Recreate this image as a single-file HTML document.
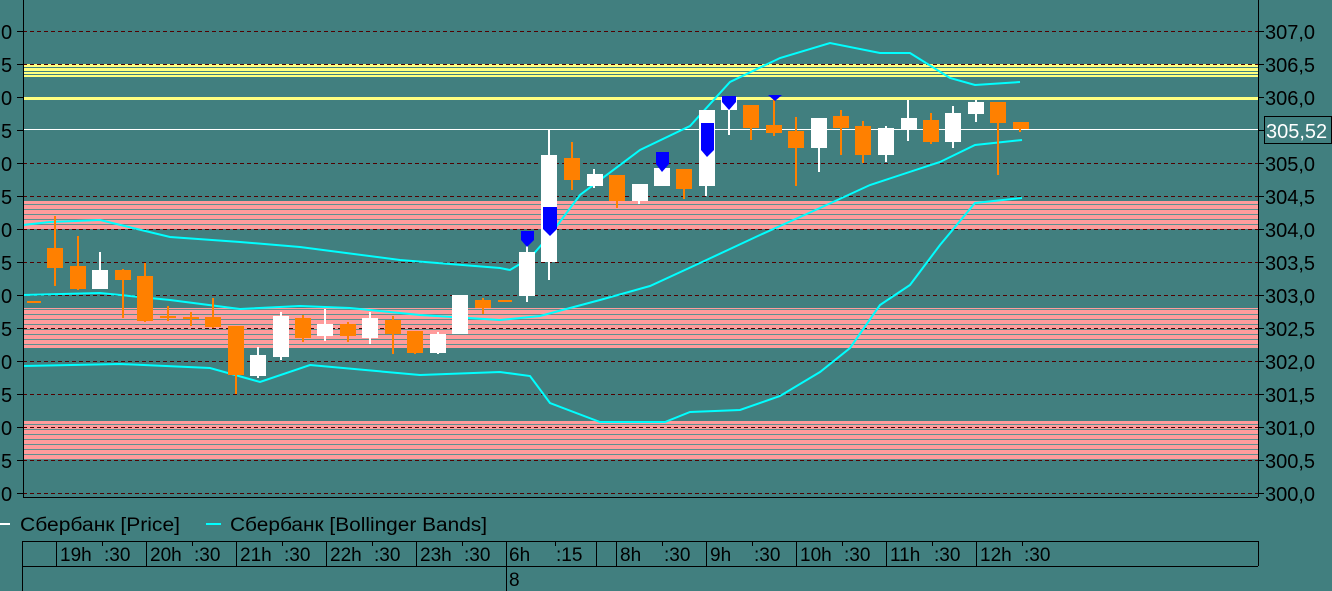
<!DOCTYPE html>
<html><head><meta charset="utf-8"><style>
html,body{margin:0;padding:0;background:#417f7f;width:1332px;height:591px;overflow:hidden;font-family:"Liberation Sans",sans-serif}
svg{position:absolute;left:0;top:0}
text{font-family:"Liberation Sans",sans-serif;font-size:20px;fill:#000}
.t{font-size:19px}
</style></head><body>
<svg width="1332" height="591" viewBox="0 0 1332 591">
<defs>
<pattern id="pk" width="10" height="5" patternUnits="userSpaceOnUse"><rect width="10" height="5" fill="#ff9c9c"/><rect y="4" width="10" height="1" fill="#5c9090"/></pattern>
</defs>
<rect width="1332" height="591" fill="#417f7f"/>
<rect x="23" y="201" width="1235" height="28" fill="url(#pk)"/>
<rect x="23" y="308" width="1235" height="40" fill="url(#pk)"/>
<rect x="23" y="421" width="1235" height="39" fill="url(#pk)"/>
<g fill="#ffff80">
<rect x="23" y="64" width="1235" height="3"/><rect x="23" y="68" width="1235" height="3"/><rect x="23" y="72" width="1235" height="2"/><rect x="23" y="75" width="1235" height="2"/>
<rect x="23" y="97" width="1235" height="3"/>
</g>
<g stroke="#500000" stroke-width="1" stroke-dasharray="4,3">
<line x1="23" x2="1258" y1="31.5" y2="31.5"/><line x1="23" x2="1258" y1="64.5" y2="64.5"/>
<line x1="23" x2="1258" y1="163.5" y2="163.5"/><line x1="23" x2="1258" y1="196.5" y2="196.5"/>
<line x1="23" x2="1258" y1="229.5" y2="229.5"/><line x1="23" x2="1258" y1="262.5" y2="262.5"/>
<line x1="23" x2="1258" y1="295.5" y2="295.5"/><line x1="23" x2="1258" y1="328.5" y2="328.5"/>
<line x1="23" x2="1258" y1="361.5" y2="361.5"/><line x1="23" x2="1258" y1="394.5" y2="394.5"/>
<line x1="23" x2="1258" y1="427.5" y2="427.5"/><line x1="23" x2="1258" y1="460.5" y2="460.5"/>
<line x1="23" x2="1258" y1="493.5" y2="493.5"/>
</g>
<line x1="23" x2="1258" y1="129.5" y2="129.5" stroke="#fff"/>
<g fill="none" stroke="#00ffff" stroke-width="2">
<polyline points="23,225 50,222 100,220 170,237 240,242 300,247 400,260 500,268 510,270 530,258 550,235 580,195 640,150 690,126 730,82 780,58 830,43 880,53 910,53 950,78 975,85 1020,82"/>
<polyline points="23,295 100,293 170,300 240,309 300,306 350,308 420,315 500,320 540,316 600,300 650,286 700,263 760,235 820,208 870,185 940,162 975,145 1022,140"/>
<polyline points="23,366 120,364 210,368 260,382 310,365 420,375 500,372 530,376 550,403 600,422 665,422 690,412 740,410 780,396 820,372 850,348 880,305 910,285 940,245 975,203 1022,198"/>
</g>
<g fill="#ff8000">
<rect x="54" y="216" width="2" height="70"/><rect x="47" y="248" width="16" height="20"/>
<rect x="77" y="236" width="2" height="54"/><rect x="70" y="266" width="16" height="23"/>
<rect x="122" y="269" width="2" height="49"/><rect x="115" y="270" width="16" height="10"/>
<rect x="144" y="263" width="2" height="59"/><rect x="137" y="276" width="16" height="45"/>
<rect x="167" y="306" width="2" height="15"/><rect x="160" y="316" width="16" height="2"/>
<rect x="190" y="312" width="2" height="14"/><rect x="183" y="317" width="16" height="2"/>
<rect x="27" y="301" width="14" height="2"/>
<rect x="212" y="298" width="2" height="30"/><rect x="205" y="317" width="16" height="10"/>
<rect x="235" y="326" width="2" height="68"/><rect x="228" y="326" width="16" height="49"/>
<rect x="302" y="315" width="2" height="27"/><rect x="295" y="318" width="16" height="20"/>
<rect x="347" y="322" width="2" height="20"/><rect x="340" y="324" width="16" height="12"/>
<rect x="392" y="316" width="2" height="38"/><rect x="385" y="320" width="16" height="14"/>
<rect x="414" y="331" width="2" height="23"/><rect x="407" y="331" width="16" height="22"/>
<rect x="482" y="298" width="2" height="16"/><rect x="475" y="300" width="16" height="8"/>
<rect x="498" y="300" width="14" height="2"/>
<rect x="571" y="142" width="2" height="48"/><rect x="564" y="158" width="16" height="22"/>
<rect x="616" y="175" width="2" height="33"/><rect x="609" y="175" width="16" height="26"/>
<rect x="683" y="169" width="2" height="30"/><rect x="676" y="169" width="16" height="20"/>
<rect x="750" y="105" width="2" height="35"/><rect x="743" y="105" width="16" height="23"/>
<rect x="773" y="96" width="2" height="40"/><rect x="766" y="125" width="16" height="8"/>
<rect x="795" y="117" width="2" height="69"/><rect x="788" y="131" width="16" height="17"/>
<rect x="840" y="110" width="2" height="45"/><rect x="833" y="116" width="16" height="12"/>
<rect x="862" y="121" width="2" height="42"/><rect x="855" y="126" width="16" height="29"/>
<rect x="930" y="113" width="2" height="31"/><rect x="923" y="120" width="16" height="22"/>
<rect x="997" y="102" width="2" height="73"/><rect x="990" y="102" width="16" height="21"/>
<rect x="1019" y="122" width="2" height="10"/><rect x="1013" y="122" width="16" height="7"/>
</g>
<g fill="#fff">
<rect x="99" y="252" width="2" height="37"/><rect x="92" y="270" width="16" height="19"/>
<rect x="257" y="347" width="2" height="31"/><rect x="250" y="355" width="16" height="21"/>
<rect x="280" y="312" width="2" height="48"/><rect x="273" y="316" width="16" height="41"/>
<rect x="324" y="309" width="2" height="32"/><rect x="317" y="324" width="16" height="12"/>
<rect x="369" y="312" width="2" height="32"/><rect x="362" y="318" width="16" height="20"/>
<rect x="437" y="332" width="2" height="22"/><rect x="430" y="334" width="16" height="19"/>
<rect x="459" y="295" width="2" height="39"/><rect x="452" y="295" width="16" height="39"/>
<rect x="526" y="240" width="2" height="62"/><rect x="519" y="252" width="16" height="44"/>
<rect x="548" y="130" width="2" height="150"/><rect x="541" y="155" width="16" height="107"/>
<rect x="593" y="169" width="2" height="19"/><rect x="587" y="174" width="16" height="12"/>
<rect x="638" y="184" width="2" height="20"/><rect x="632" y="184" width="16" height="17"/>
<rect x="660" y="168" width="2" height="18"/><rect x="654" y="168" width="16" height="18"/>
<rect x="705" y="110" width="2" height="86"/><rect x="699" y="110" width="16" height="76"/>
<rect x="728" y="97" width="2" height="38"/><rect x="721" y="97" width="16" height="13"/>
<rect x="818" y="118" width="2" height="54"/><rect x="811" y="118" width="16" height="30"/>
<rect x="885" y="126" width="2" height="36"/><rect x="878" y="128" width="16" height="27"/>
<rect x="907" y="100" width="2" height="41"/><rect x="901" y="118" width="16" height="12"/>
<rect x="952" y="106" width="2" height="42"/><rect x="945" y="113" width="16" height="29"/>
<rect x="975" y="100" width="2" height="22"/><rect x="968" y="102" width="16" height="12"/>
</g>
<g fill="#0000ff">
<polygon points="521,231 534,231 534,240 527,247 521,240"/>
<polygon points="543,207 557,207 557,229 550,236 543,229"/>
<polygon points="656,152 669,152 669,164 662,172 656,164"/>
<polygon points="701,123 714,123 714,150 707,157 701,150"/>
<polygon points="722,96 736,96 736,102 729,110 722,102"/>
<polygon points="768,95 782,95 775,101"/>
</g>
<line x1="23.5" y1="0" x2="23.5" y2="497" stroke="#000"/>
<line x1="23" y1="497.5" x2="1258" y2="497.5" stroke="#000"/>
<line x1="1258.5" y1="0" x2="1258.5" y2="497" stroke="#000"/>
<g stroke="#000">
<path d="M1258 31.5h6M1258 64.5h6M1258 97.5h6M1258 130.5h6M1258 163.5h6M1258 196.5h6M1258 229.5h6M1258 262.5h6M1258 295.5h6M1258 328.5h6M1258 361.5h6M1258 394.5h6M1258 427.5h6M1258 460.5h6M1258 493.5h6"/>
<path d="M17 31.5h6M17 64.5h6M17 97.5h6M17 130.5h6M17 163.5h6M17 196.5h6M17 229.5h6M17 262.5h6M17 295.5h6M17 328.5h6M17 361.5h6M17 394.5h6M17 427.5h6M17 460.5h6M17 493.5h6"/>
</g>
<g>
<text x="1265" y="39">307,0</text><text x="1265" y="72">306,5</text><text x="1265" y="105">306,0</text>
<text x="1265" y="171">305,0</text><text x="1265" y="204">304,5</text><text x="1265" y="237">304,0</text>
<text x="1265" y="270">303,5</text><text x="1265" y="303">303,0</text><text x="1265" y="336">302,5</text>
<text x="1265" y="369">302,0</text><text x="1265" y="402">301,5</text><text x="1265" y="435">301,0</text>
<text x="1265" y="468">300,5</text><text x="1265" y="501">300,0</text>
</g>
<g>
<text x="1" y="39">0</text><text x="1" y="72">5</text><text x="1" y="105">0</text><text x="1" y="138">5</text>
<text x="1" y="171">0</text><text x="1" y="204">5</text><text x="1" y="237">0</text><text x="1" y="270">5</text>
<text x="1" y="303">0</text><text x="1" y="336">5</text><text x="1" y="369">0</text><text x="1" y="402">5</text>
<text x="1" y="435">0</text><text x="1" y="468">5</text><text x="1" y="501">0</text>
</g>
<rect x="1264.5" y="116.5" width="67" height="27" fill="#417f7f" stroke="#000"/>
<text x="1266" y="138" style="fill:#fff">305,52</text>
<rect x="0" y="523" width="10" height="2" fill="#fff"/>
<text x="20" y="531" class="t" textLength="160" lengthAdjust="spacingAndGlyphs">Сбербанк [Price]</text>
<rect x="206" y="523" width="15" height="2" fill="#00ffff"/>
<text x="230" y="531" class="t" textLength="257" lengthAdjust="spacingAndGlyphs">Сбербанк [Bollinger Bands]</text>
<g stroke="#000" fill="none">
<line x1="22" y1="541.5" x2="1258" y2="541.5"/>
<line x1="22" y1="566.5" x2="1258" y2="566.5"/>
<line x1="22.5" y1="541" x2="22.5" y2="591"/>
<line x1="1258.5" y1="541" x2="1258.5" y2="566"/>
<path d="M56.5 541v25M146.5 541v25M236.5 541v25M326.5 541v25M416.5 541v25M506.5 541v50M596.5 541v25M616.5 541v25M706.5 541v25M796.5 541v25M886.5 541v25M976.5 541v25"/>
<path d="M102.5 541v5M192.5 541v5M282.5 541v5M372.5 541v5M462.5 541v5M555.5 541v5M662.5 541v5M752.5 541v5M842.5 541v5M932.5 541v5M1022.5 541v5"/>
</g>
<g>
<text x="60" y="561" class="t">19h</text><text x="104" y="561" class="t">:30</text>
<text x="150" y="561" class="t">20h</text><text x="194" y="561" class="t">:30</text>
<text x="240" y="561" class="t">21h</text><text x="284" y="561" class="t">:30</text>
<text x="330" y="561" class="t">22h</text><text x="374" y="561" class="t">:30</text>
<text x="420" y="561" class="t">23h</text><text x="464" y="561" class="t">:30</text>
<text x="509" y="561" class="t">6h</text><text x="556" y="561" class="t">:15</text>
<text x="620" y="561" class="t">8h</text><text x="664" y="561" class="t">:30</text>
<text x="710" y="561" class="t">9h</text><text x="754" y="561" class="t">:30</text>
<text x="800" y="561" class="t">10h</text><text x="844" y="561" class="t">:30</text>
<text x="890" y="561" class="t">11h</text><text x="934" y="561" class="t">:30</text>
<text x="980" y="561" class="t">12h</text><text x="1024" y="561" class="t">:30</text>
<text x="509" y="586" class="t">8</text>
</g>
</svg>
</body></html>
